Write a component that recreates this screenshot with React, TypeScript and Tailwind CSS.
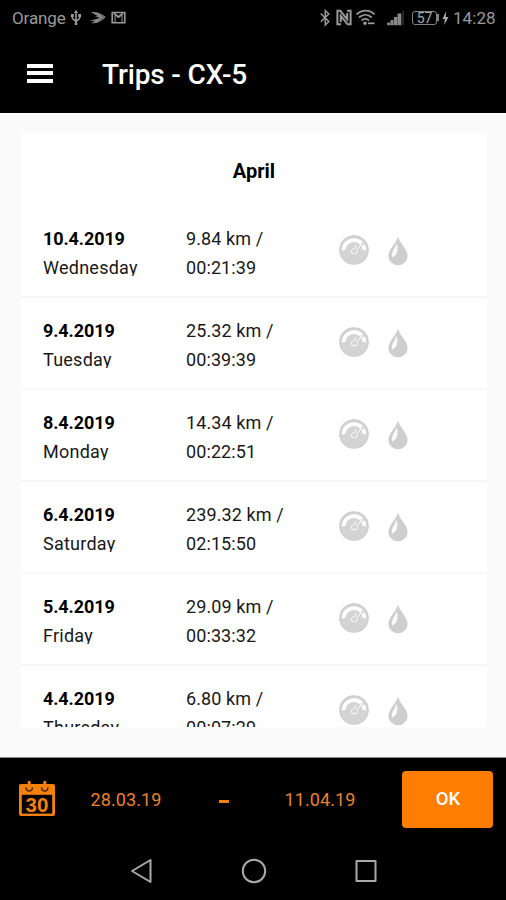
import React from "react";

type Trip = { date: string; day: string; distance: string; time: string };

const trips: Trip[] = [
  { date: "10.4.2019", day: "Wednesday", distance: "9.84 km /", time: "00:21:39" },
  { date: "9.4.2019", day: "Tuesday", distance: "25.32 km /", time: "00:39:39" },
  { date: "8.4.2019", day: "Monday", distance: "14.34 km /", time: "00:22:51" },
  { date: "6.4.2019", day: "Saturday", distance: "239.32 km /", time: "02:15:50" },
  { date: "5.4.2019", day: "Friday", distance: "29.09 km /", time: "00:33:32" },
  { date: "4.4.2019", day: "Thursday", distance: "6.80 km /", time: "00:07:29" },
];

function Gauge() {
  return (
    <svg width="32" height="32" viewBox="0 0 32 32" fill="none">
      <circle cx="16" cy="16" r="14.2" fill="#d4d4d4" stroke="#cdcdcd" strokeWidth="1.2" />
      <path d="M3.8 16.5A12.2 12.2 0 0 1 28.2 16.5L24.6 16A8.7 8.7 0 0 0 7.4 16Z" fill="#fff" />
      <path d="M7.4 16.5a8.6 8.6 0 0 1 17.2 0Z" fill="#d4d4d4" />
      <path d="M22.5 8.5 26.5 9.5 24.5 12.5Z" fill="#d4d4d4" />
      <path d="m23.6 9.7-4.4 5.8c.9 2.2-.3 4.1-2.4 4.1-2.4 0-3.6-1-3.6-2.3 0-1.4 1.4-2.2 3.2-2.8l1.8-3.6" stroke="#f4f4f4" strokeWidth="1.1" />
    </svg>
  );
}

function Drop() {
  return (
    <svg width="20" height="30" viewBox="0 0 20 30">
      <path d="M10 .8C8 8 .4 13.1.4 20a9.6 9.3 0 0 0 19.2 0C19.6 13.1 12 8 10 .8Z" fill="#cecece" />
      <path d="M9 7C9.4 11 10 16 8 18.6c-1 1.3-2.4 1.8-3 3.3-1.3-1.5-1.6-3-1-4.9C5 13.9 7.8 11 9 7Z" fill="#fafafa" />
    </svg>
  );
}

function TripRow({ trip }: { trip: Trip }) {
  return (
    <div className="flex h-[92px] shrink-0 border-b-2 border-[#f6f6f6] pl-[22px] pt-[19px] text-[18px] text-[#181818]">
      <div className="w-[143px]">
        <div className="h-[28px] font-bold leading-[28px] tracking-[-0.1px] text-black">{trip.date}</div>
        <div className="h-[23px] overflow-hidden leading-[29px] tracking-[0.25px]">{trip.day}</div>
      </div>
      <div className="w-[152px]">
        <div className="h-[28px] leading-[28px] tracking-[0.1px]">{trip.distance}</div>
        <div className="leading-[29px] tracking-[0.1px]">{trip.time}</div>
      </div>
      <div className="flex items-start pt-[9px]">
        <Gauge />
        <div className="ml-[18px] mt-[2px]">
          <Drop />
        </div>
      </div>
    </div>
  );
}

function StatusIconsLeft() {
  return (
    <svg className="ml-[5px] mt-[9px]" width="57" height="18" viewBox="70 9 57 18" fill="none" stroke="#999" strokeWidth="1.6">
      <path d="M76 12v13M72.3 15.5v2.2c0 2.5 3.7 2 3.7 4.3M79.7 14.5v3.2c0 2.5-3.7 2-3.7 4.3" />
      <path d="m74 13 2-3.3 2 3.3ZM71 14h2.8v3H71ZM78.2 14H81v3h-2.8ZM74.7 22.5h2.6v2.5h-2.6Z" fill="#999" stroke="none" />
      <path d="M91 12.2c5-.8 9.5.8 14.8 4.8-4.6 4.5-9.3 6.9-14.8 6.2l4-2-5.3-.4 6-1.6 4-1.4-5-1.5 3-.3Z" fill="#888" stroke="none" />
      <path d="m99.5 13 4 4-4.5 4.2" stroke="#222" strokeWidth=".5" />
      <path d="M112.2 12.5h12.6v10.3h-12.6Z" />
      <path d="M115 22v-6.5M122 22v-6.5" strokeWidth="1" />
      <path d="m114 13.5 4.5 3.5 4.5-3.5" strokeWidth="1.8" />
    </svg>
  );
}

function StatusIconsRight() {
  return (
    <svg width="90" height="20" viewBox="318 8 90 20" fill="none" stroke="#999" strokeWidth="1.5">
      <path d="m320.8 13.5 8 8-3.5 3.5V10.5l3.5 3.6-8 7.7" />
      <path d="M341 24.3h-3.6V10.8h3l6.8 8.5V13M347 10.8h3.6v13.5h-3l-6.8-8.5V22" strokeWidth="2" />
      <path d="M356.5 14.3c5.5-5 13-5 18 0M359 17.5c4-3.5 9-3.5 12.7 0M361.5 20.5c2.5-2 5.2-2 7.5 0" strokeWidth="1.8" />
      <circle cx="365" cy="23.3" r="1.7" fill="#999" stroke="none" />
      <path d="M368 23.3h6.5" strokeWidth="1.8" />
      <path d="M387.2 22.5h3v2.7h-3ZM390.6 20h3v5.2h-3ZM394 17h3.2v8.2H394ZM397.5 13.5h3.8v11.7h-3.8Z" fill="#8a8a8a" stroke="none" />
      <path d="M403 10.5v14.7" stroke="#252525" strokeWidth="2" />
    </svg>
  );
}

function CalendarIcon() {
  return (
    <svg width="38" height="36" viewBox="0 0 38 36">
      <path d="M3 3h32a2 2 0 0 1 2 2v28a2 2 0 0 1-2 2H3a2 2 0 0 1-2-2V5a2 2 0 0 1 2-2Z" fill="#f5810b" />
      <path d="M3.8 13.8h30.4v18.8H3.8Z" fill="#000" />
      <path d="M8 6.3c.2 5 6.3 5 6.5 0M23.5 6.3c.2 5 6.3 5 6.5 0" fill="none" stroke="#542900" strokeWidth="1.5" />
      <path d="M11.2 1.3v5.6M26.8 1.3v5.6" stroke="#f5810b" strokeWidth="3" strokeLinecap="round" />
      <text x="19" y="30.5" textAnchor="middle" fontFamily="Liberation Sans, sans-serif" fontWeight="700" fontSize="20.5" fill="#f5810b">30</text>
    </svg>
  );
}

export default function App() {
  return (
    <div className="flex h-[900px] w-[506px] flex-col overflow-hidden bg-black font-['Roboto',sans-serif]">
      <div className="flex h-9 items-start bg-black pl-3 text-[#999]">
        <span className="mt-[6px] w-[53px] text-[17px] leading-6 tracking-[-0.1px]">Orange</span>
        <StatusIconsLeft />
        <div className="ml-auto flex w-[188px] items-start pt-2">
          <StatusIconsRight />
          <div className="ml-[4px] mt-[3px] flex h-[14px] w-[25px] items-center justify-center rounded-[3px] border-[1.5px] border-[#858585] text-[14px] leading-none text-[#aaa]">57</div>
          <div className="mt-[6px] h-[7px] w-[2px] bg-[#858585]" />
          <svg className="ml-[3px] mt-[3px]" width="7" height="14" viewBox="0 0 7 14" fill="#aaa">
            <path d="M4.2 0 .5 8h2.3L2.3 14 6.5 6H3.8Z" />
          </svg>
          <span className="ml-[4px] -mt-[2px] text-[17px] leading-6 tracking-[0.05px]">14:28</span>
        </div>
      </div>

      <header className="flex h-[77px] items-center bg-black text-white">
        <button className="ml-[27px] mt-[-3px] flex w-[26px] flex-col gap-[3.5px]" aria-label="Menu">
          <span className="h-[4px] w-full bg-white" />
          <span className="h-[4px] w-full bg-white" />
          <span className="h-[4px] w-full bg-white" />
        </button>
        <h1 className="ml-[49px] text-[28px] font-medium leading-8 tracking-[-0.15px]">Trips - CX-5</h1>
      </header>

      <main className="h-[644px] bg-[#fafafa] pl-[21px] pr-[19px] pt-[20px]">
        <section className="flex h-[594px] flex-col overflow-hidden bg-white">
          <h2 className="h-[73px] shrink-0 pt-[22px] text-center text-[20px] font-bold leading-8 text-black">April</h2>
          {trips.map((trip) => (
            <TripRow key={trip.date} trip={trip} />
          ))}
        </section>
      </main>

      <footer className="flex h-[84px] border-t border-[#888] bg-black text-[18px] text-[#e9812c]">
        <div className="ml-[18px] mt-[23px] w-[38px]">
          <CalendarIcon />
        </div>
        <div className="ml-[34.5px] mt-[30px] w-[72px] whitespace-nowrap leading-6 tracking-[0.1px]">28.03.19</div>
        <div className="ml-[56.5px] mt-[42px] h-[3px] w-[10px] bg-[#f5810b]" />
        <div className="ml-[55.5px] mt-[30px] w-[72px] whitespace-nowrap leading-6 tracking-[0.1px]">11.04.19</div>
        <button className="ml-[45.5px] mt-[13px] h-[57px] w-[91px] rounded-[4px] bg-[#ff7d00] pl-px pt-px text-[18.5px] font-medium text-white">OK</button>
      </footer>

      <nav className="flex h-[59px] items-start bg-black pt-[17px]">
        <svg className="ml-[129px]" width="24" height="26" viewBox="0 0 24 26" fill="none" stroke="#aaa" strokeWidth="2" strokeLinejoin="round">
          <path d="M21.5 2v22L3 13Z" />
        </svg>
        <svg className="ml-[88px]" width="26" height="26" viewBox="0 0 26 26" fill="none" stroke="#aaa" strokeWidth="2">
          <circle cx="13" cy="13" r="11.2" />
        </svg>
        <svg className="ml-[87px]" width="24" height="26" viewBox="0 0 24 26" fill="none" stroke="#aaa" strokeWidth="2" strokeLinejoin="round">
          <path d="M2.5 3h19v20h-19Z" />
        </svg>
      </nav>
    </div>
  );
}
